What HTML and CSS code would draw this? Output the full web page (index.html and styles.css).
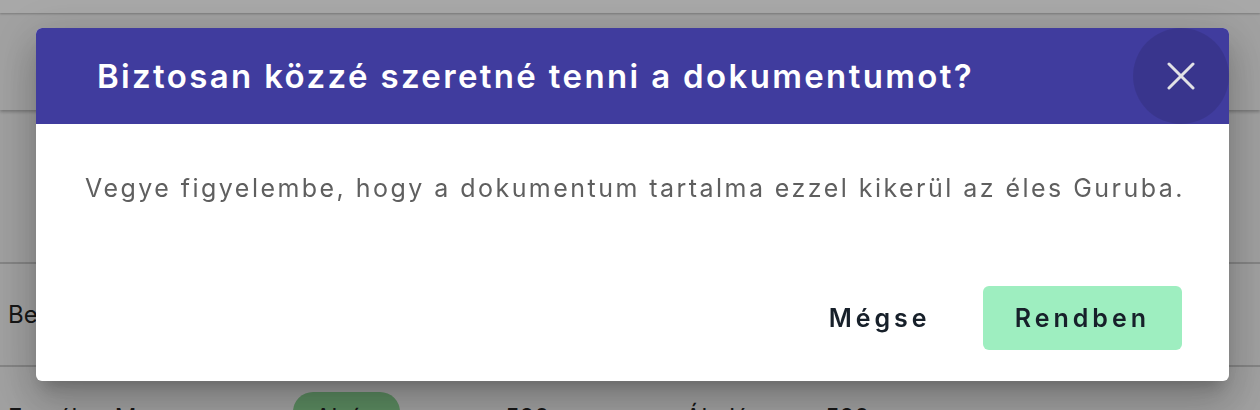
FILE: index.html
```html
<!DOCTYPE html>
<html lang="hu">
<head>
<meta charset="utf-8">
<title>Közzététel</title>
<link rel="stylesheet" href="styles.css">
</head>
<body>
<div class="page">
  <div class="topstrip"></div>
  <div class="toolbar"></div>
  <div class="filters"></div>
  <div class="row"><span class="cell name">Benedek Kovács</span></div>
  <div class="row">
    <span class="cell name">Erzsébet Magyar</span>
    <span class="cell pillcell"><span class="pill">Aktív</span></span>
    <span class="cell num">520</span>
    <span class="cell type">Általános</span>
    <span class="cell num">520</span>
  </div>
</div>

<div class="overlay">
  <div class="dialog" role="dialog">
    <div class="dlg-head">
      <h2 class="dlg-title">Biztosan közzé szeretné tenni a dokumentumot?</h2>
      <button class="dlg-close" aria-label="Bezárás">
        <svg width="28" height="28" viewBox="0 0 28 28"><path d="M2 2 L26 26 M26 2 L2 26" stroke="#e2e2e6" stroke-width="3" stroke-linecap="round" fill="none"/></svg>
      </button>
    </div>
    <div class="dlg-body">Vegye figyelembe, hogy a dokumentum tartalma ezzel kikerül az éles Guruba.</div>
    <div class="dlg-actions">
      <button class="btn btn-cancel">Mégse</button>
      <button class="btn btn-ok">Rendben</button>
    </div>
  </div>
</div>
</body>
</html>
```

FILE: styles.css
```css
* { box-sizing: border-box; }
html, body { margin: 0; height: 100%; overflow: hidden; }
body {
  font-family: Inter, "Noto Sans", sans-serif;
  background: #f3f3f3;
  color: #222;
}
.page { position: relative; z-index: 0; }
.topstrip { height: 13px; background: #ffffff; box-shadow: 0 1px 2px rgba(0,0,0,.25); position: relative; z-index: 2; }
.toolbar { height: 97px; background: #f4f4f4; box-shadow: 0 2px 3px rgba(0,0,0,.25); position: relative; z-index: 1; }
.filters { height: 152px; background: #f2f2f2; }
.row {
  height: 103px;
  border-top: 2px solid #c8c8c8;
  background: #f3f3f3;
  display: flex;
  align-items: center;
  padding-left: 8px;
  font-size: 24px;
}
.cell.name { width: 285px; }
.pill {
  display: inline-block;
  background: #8ad292;
  border-radius: 20px;
  padding: 11px 22px;
  width: 107px;
}
.pillcell { width: 212px; }
.num { width: 180px; }
.type { width: 140px; }

.overlay {
  position: fixed;
  inset: 0;
  z-index: 10;
  background: rgba(0,0,0,.34);
  display: flex;
  padding: 28px 31px 29px 36px;
}
.dialog {
  flex: 1;
  background: #fff;
  border-radius: 6px;
  display: flex;
  flex-direction: column;
  box-shadow: 0 11px 15px -7px rgba(0,0,0,.2), 0 24px 38px 3px rgba(0,0,0,.14), 0 9px 46px 8px rgba(0,0,0,.12);
  overflow: hidden;
}
.dlg-head {
  height: 96px;
  background: #403c9e;
  display: flex;
  align-items: center;
  padding-left: 61px;
}
.dlg-title {
  margin: 0;
  color: #fff;
  font-size: 33px;
  font-weight: 600;
  letter-spacing: 2.35px;
}
.dlg-close {
  margin-left: auto;
  width: 96px;
  height: 96px;
  border: 0;
  border-radius: 50%;
  background: rgba(0,0,0,.1);
  display: flex;
  align-items: center;
  justify-content: center;
  padding: 0;
}
.dlg-body {
  padding: 48px 30px 0 49px;
  font-size: 25px;
  line-height: 32px;
  color: #5f5f5f;
  letter-spacing: 2.46px;
  white-space: nowrap;
}
.dlg-actions {
  margin-top: auto;
  display: flex;
  justify-content: flex-end;
  gap: 20px;
  padding: 0 47px 31px;
}
.btn {
  height: 64px;
  border: 0;
  border-radius: 6px;
  padding: 0 32px;
  font-family: inherit;
  font-size: 25px;
  font-weight: 600;
  letter-spacing: 4px;
  color: #17202a;
  background: transparent;
}
.btn-ok { background: #9eeec0; }
```
